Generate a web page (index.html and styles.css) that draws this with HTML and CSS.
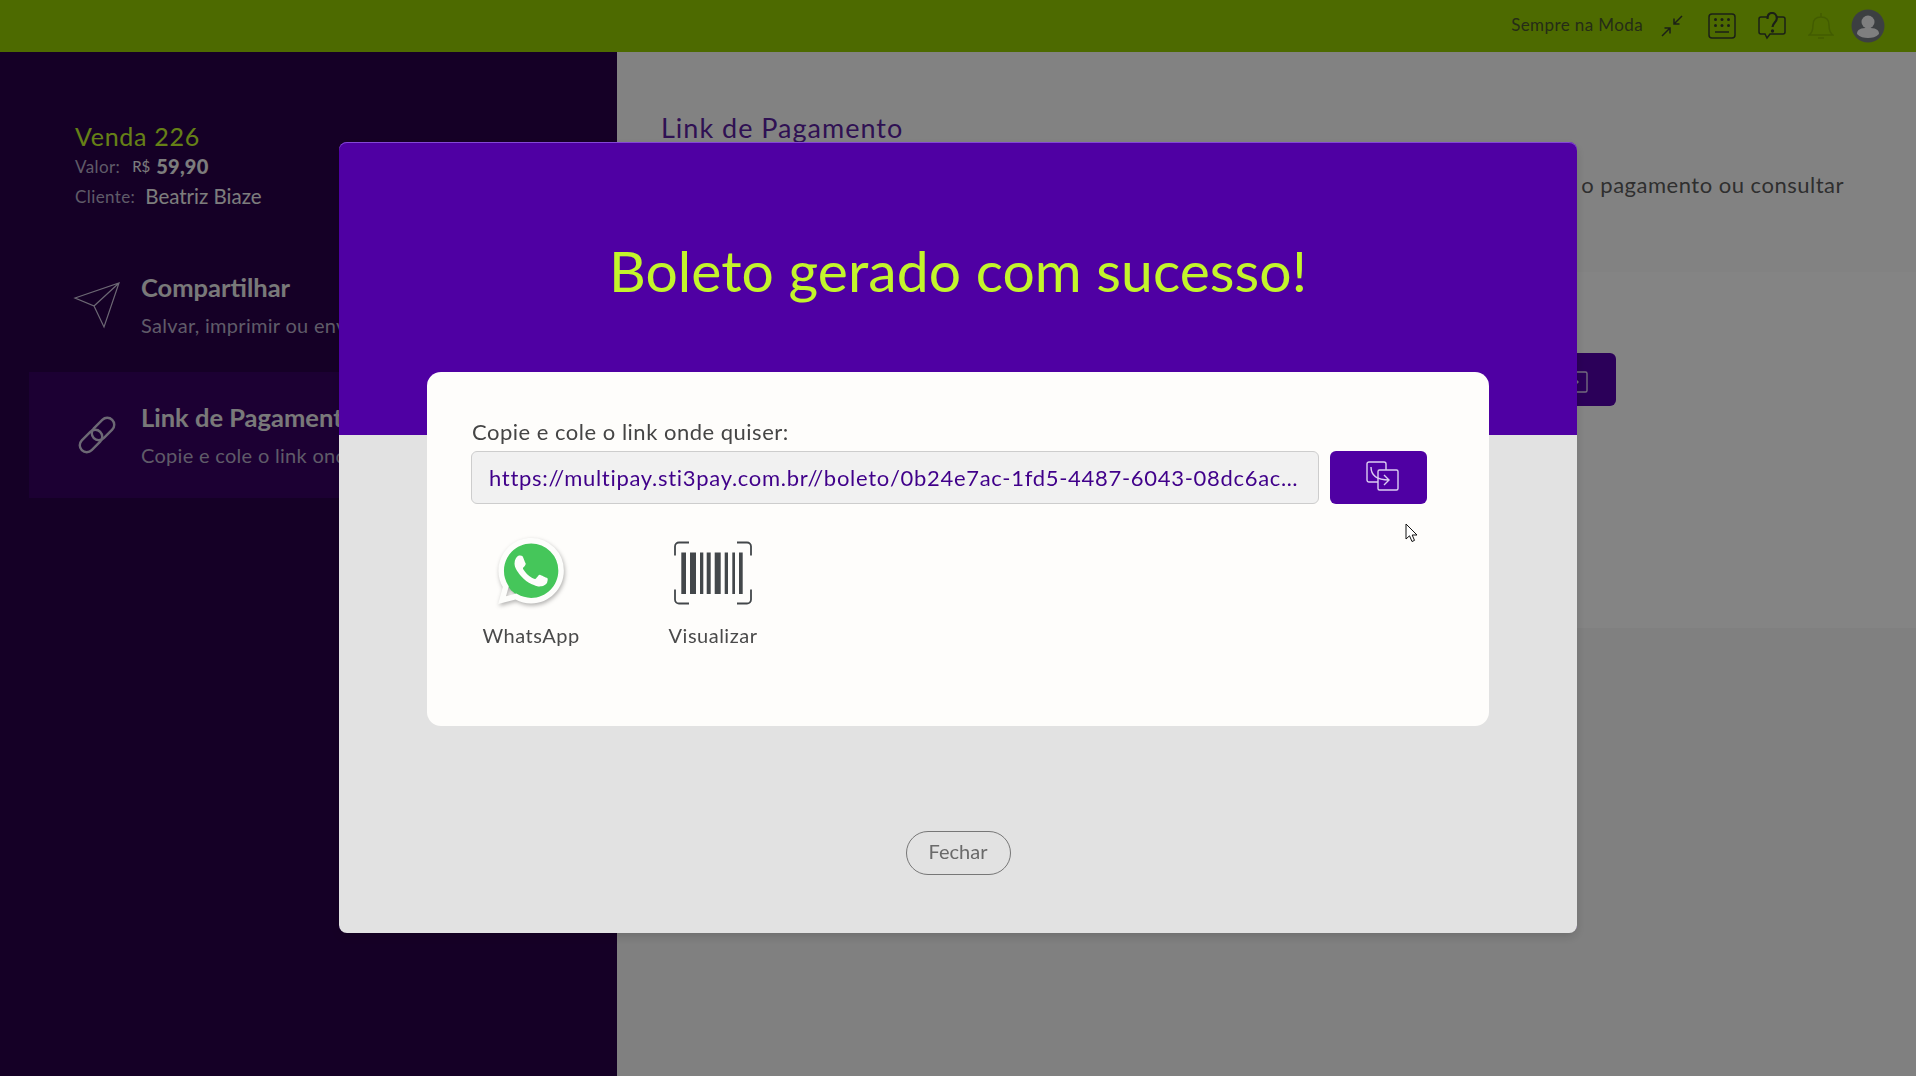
FILE: index.html
```html
<!DOCTYPE html>
<html lang="pt-BR">

<head>
    <meta charset="UTF-8">
    <meta name="viewport" content="width=device-width, initial-scale=1.0">
    <title>Link de Pagamento</title>
    <link rel="stylesheet" href="styles.css">
</head>

<body>
    <header class="topbar">
        <span class="store-name">Sempre na Moda</span>
        <svg class="top-icon compress" viewBox="0 0 22 22" fill="none">
            <path d="M21 1 13 9M13 3.500V9H18.500M1 21 9 13M3.500 13H9V18.500" />
        </svg>
        <svg class="top-icon keypad" viewBox="0 0 28 26" fill="none">
            <rect x="1" y="1" width="26" height="24" rx="3" />
            <path d="M7 19H21" />
            <g class="dots">
                <circle cx="7.500" cy="6.500" r="1.500" />
                <circle cx="14" cy="6.500" r="1.500" />
                <circle cx="20.500" cy="6.500" r="1.500" />
                <circle cx="7.500" cy="12.500" r="1.500" />
                <circle cx="14" cy="12.500" r="1.500" />
                <circle cx="20.500" cy="12.500" r="1.500" />
            </g>
        </svg>
        <svg class="top-icon help" viewBox="0 0 28 28" fill="none">
            <path d="M9 5H3a2 2 0 0 0-2 2v13a2 2 0 0 0 2 2h4l2 4 3-4h13a2 2 0 0 0 2-2V7a2 2 0 0 0-2-2h-6" />
            <path class="question" d="M9.500 7C9.500 3 11.500 1 14 1s4.800 2 4.800 5.500c0 3.500-4.300 4.500-4.300 8.500" />
            <circle class="dot" cx="14.500" cy="19" r="1.700" />
        </svg>
        <svg class="top-icon bell" viewBox="0 0 26 28" fill="none">
            <path d="M1 23c3-2 4-5 4-10 0-5 3-8 8-8s8 3 8 8c0 5 1 8 4 10ZM13 1v4M10 26h6" />
        </svg>
        <svg class="avatar" viewBox="0 0 34 34">
            <circle cx="17" cy="17" r="16.500" fill="#74797e" />
            <circle cx="17" cy="13" r="6.500" fill="#f4f4f4" />
            <path d="M6 25c0-5 4-6 11-6s11 1 11 6c-3 3-7 4-11 4s-8-1-11-4Z" fill="#f4f4f4" />
        </svg>
    </header>

    <main class="page">
        <aside class="sidebar">
            <div class="sale-info">
                <div class="sale-title">Venda 226</div>
                <div class="sale-line"><span class="sale-label">Valor:</span><small>R$</small><b>59,90</b></div>
                <div class="sale-line client"><span class="sale-label">Cliente:</span><span>Beatriz Biaze</span></div>
            </div>
            <nav>
                <a class="nav-item">
                    <svg class="nav-icon" viewBox="0 0 48 48" fill="none">
                        <path d="M2 17 46 2 31 46 21 25ZM21 25 46 2" />
                    </svg>
                    <div class="nav-text">
                        <div class="nav-title">Compartilhar</div>
                        <div class="nav-desc">Salvar, imprimir ou enviar o boleto</div>
                    </div>
                </a>
                <a class="nav-item active">
                    <svg class="nav-icon link-icon" viewBox="0 0 48 48" fill="none">
                        <rect x="17" y="11" width="26" height="14" rx="7" transform="rotate(-45 30 18)" />
                        <rect x="5" y="23" width="26" height="14" rx="7" transform="rotate(-45 18 30)" />
                    </svg>
                    <div class="nav-text">
                        <div class="nav-title">Link de Pagamento</div>
                        <div class="nav-desc">Copie e cole o link onde quiser</div>
                    </div>
                </a>
            </nav>
        </aside>

        <section class="content">
            <div class="content-head">
                <h2>Link de Pagamento</h2>
                <p>Compartilhe o link com o cliente para receber o pagamento ou consultar</p>
            </div>
            <div class="content-band">
                <button class="copy-btn">
                    <svg viewBox="0 0 33 30" fill="none">
                        <path d="M12 21H3a2 2 0 0 1-2-2V3a2 2 0 0 1 2-2h15a2 2 0 0 1 2 2v6" />
                        <rect x="12" y="9" width="20" height="20" rx="1.500" />
                        <path d="M5 6c0 8 6 13 18 13M18 14l5 5-5 5" />
                    </svg>
                </button>
            </div>
        </section>
    </main>

    <div class="overlay">
        <div class="modal">
            <h1 class="modal-title">Boleto gerado com sucesso!</h1>
            <div class="card">
                <label class="link-label">Copie e cole o link onde quiser:</label>
                <div class="link-row">
                    <input class="link-input" readonly
                        value="https://multipay.sti3pay.com.br//boleto/0b24e7ac-1fd5-4487-6043-08dc6ac1d2f3a9">
                    <button class="copy-btn">
                        <svg viewBox="0 0 33 30" fill="none">
                            <path d="M12 21H3a2 2 0 0 1-2-2V3a2 2 0 0 1 2-2h15a2 2 0 0 1 2 2v6" />
                            <rect x="12" y="9" width="20" height="20" rx="1.500" />
                            <path d="M5 6c0 8 6 13 18 13M18 14l5 5-5 5" />
                        </svg>
                    </button>
                </div>
                <div class="actions">
                    <div class="action">
                        <svg class="action-icon whatsapp" viewBox="0 0 24 24">
                            <circle cx="12.050" cy="11.900" r="10.200" fill="#45c65a" />
                            <path fill="#fdfdfb"
                                d="M17.472 14.382c-.297-.149-1.758-.867-2.03-.967-.273-.099-.471-.148-.67.15-.197.297-.767.966-.94 1.164-.173.199-.347.223-.644.075-.297-.15-1.255-.463-2.39-1.475-.883-.788-1.48-1.761-1.653-2.059-.173-.297-.018-.458.13-.606.134-.133.298-.347.446-.52.149-.174.198-.298.298-.497.099-.198.05-.371-.025-.52-.075-.149-.669-1.612-.916-2.207-.242-.579-.487-.5-.669-.51-.173-.008-.371-.01-.57-.01-.198 0-.52.074-.792.372-.272.297-1.04 1.016-1.04 2.479 0 1.462 1.065 2.875 1.213 3.074.149.198 2.096 3.2 5.077 4.487.709.306 1.262.489 1.694.625.712.227 1.36.195 1.871.118.571-.085 1.758-.719 2.006-1.413.248-.694.248-1.289.173-1.413-.074-.124-.272-.198-.57-.347m-5.421 7.403h-.004a9.87 9.87 0 01-5.031-1.378l-.361-.214-3.741.982.998-3.648-.235-.374a9.86 9.86 0 01-1.51-5.26c.001-5.45 4.436-9.884 9.888-9.884 2.64 0 5.122 1.03 6.988 2.898a9.825 9.825 0 012.893 6.994c-.003 5.45-4.437 9.884-9.885 9.884m8.413-18.297A11.815 11.815 0 0012.05 0C5.495 0 .16 5.335.157 11.892c0 2.096.547 4.142 1.588 5.945L.057 24l6.305-1.654a11.882 11.882 0 005.683 1.448h.005c6.554 0 11.89-5.335 11.893-11.893a11.821 11.821 0 00-3.48-8.413z" />
                        </svg>
                        <span>WhatsApp</span>
                    </div>
                    <div class="action">
                        <svg class="action-icon barcode" viewBox="0 0 78 63">
                            <path class="frame" d="M15 1H5a4 4 0 0 0-4 4V14M63 1H73a4 4 0 0 1 4 4V14M15 62H5a4 4 0 0 1-4-4V48M63 62H73a4 4 0 0 0 4-4V48" />
                            <rect x="7.300" y="11" width="4.700" height="41.500" />
                            <rect x="16" y="11" width="6" height="41.500" />
                            <rect x="26" y="11" width="3.300" height="41.500" />
                            <rect x="32.700" y="11" width="4" height="41.500" />
                            <rect x="40.700" y="11" width="6" height="41.500" />
                            <rect x="50.700" y="11" width="3.300" height="41.500" />
                            <rect x="58.300" y="11" width="2.700" height="41.500" />
                            <rect x="65" y="11" width="3.700" height="41.500" />
                        </svg>
                        <span>Visualizar</span>
                    </div>
                </div>
            </div>
            <div class="modal-footer">
                <button class="close-btn">Fechar</button>
            </div>
        </div>
        <svg class="cursor" viewBox="0 0 13 20">
            <path d="M1 1V16L4.500 12.800 7 18.500 9.500 17.400 7.200 12H12Z" fill="#fff" stroke="#111" stroke-width="1" />
        </svg>
    </div>
</body>

</html>
```

FILE: styles.css
```css
* {
    box-sizing: border-box;
}

body {
    margin: 0;
    height: 1076px;
    overflow: hidden;
    font-family: "Lato", "Noto Sans", sans-serif;
    background-color: #f6f6f6;
}

.topbar {
    height: 52px;
    display: flex;
    align-items: center;
    justify-content: flex-end;
    padding-right: 31px;
    background-color: #94cc00;
}

.store-name {
    font-size: 17px;
    letter-spacing: 0.4px;
    color: #48552c;
    margin-right: 18px;
    padding-bottom: 3px;
}

.top-icon {
    stroke: #343c2c;
    stroke-width: 1.500;
}

.top-icon .dots,
.top-icon .dot {
    fill: #343c2c;
    stroke: none;
}

.top-icon .question {
    stroke-width: 2.200;
}

.compress {
    width: 22px;
    height: 22px;
    margin-right: 25px;
}

.keypad {
    width: 28px;
    height: 26px;
    margin-right: 22px;
}

.help {
    width: 28px;
    height: 28px;
    margin-right: 22px;
}

.bell {
    width: 26px;
    height: 28px;
    margin-right: 17px;
    stroke: #7fb000;
}

.avatar {
    width: 34px;
    height: 34px;
}

.page {
    display: flex;
    height: 1024px;
}

.sidebar {
    width: 617px;
    flex-shrink: 0;
    padding-top: 69px;
    background-color: #2a0049;
}

.sale-info {
    padding-left: 75px;
    height: 121px;
    color: #b6aec8;
}

.sale-title {
    font-size: 25px;
    line-height: 30px;
    color: #c3f52b;
    letter-spacing: 0.7px;
}

.sale-line {
    display: flex;
    align-items: center;
    height: 28px;
    margin-top: 1px;
    font-size: 20.500px;
    color: #f0f0f0;
}

.sale-line small {
    font-size: 15px;
    margin-right: 6px;
}

.sale-line b {
    font-size: 20px;
    font-weight: 900;
    letter-spacing: 0.2px;
}

.client {
    margin-top: 2px;
}

.client .sale-label {
    margin-right: 10px;
}

.sale-label {
    font-size: 17px;
    letter-spacing: 0.4px;
    color: #b6aec8;
    margin-right: 12px;
}

.nav-item {
    display: flex;
    align-items: center;
    height: 126px;
    margin-bottom: 4px;
    margin-left: 29px;
    padding-left: 46px;
}

.nav-item.active {
    background-color: #360062;
}

.nav-icon {
    width: 48px;
    height: 48px;
    margin-left: -2px;
    margin-right: 20px;
    flex-shrink: 0;
    stroke: #cfc8de;
    stroke-width: 1.200;
}

.link-icon {
    stroke-width: 2.400;
}

.nav-text {
    margin-bottom: 2px;
}

.nav-title {
    font-size: 25.500px;
    line-height: 36px;
    font-weight: 700;
    color: #e9e9e9;
}

.nav-desc {
    margin-top: 5px;
    font-size: 20px;
    line-height: 30px;
    letter-spacing: 0.3px;
    color: #b6aec8;
    white-space: nowrap;
}

.content {
    flex: 1;
    display: flex;
    flex-direction: column;
}

.content-head {
    height: 220px;
    padding: 58px 72px 0 44px;
    background-color: #fafafa;
}

.content-head h2 {
    margin: 0;
    font-size: 27px;
    line-height: 36px;
    font-weight: 400;
    letter-spacing: 1px;
    color: #5a22a0;
}

.content-head p {
    margin: 24px 0 0;
    font-size: 22px;
    line-height: 30px;
    letter-spacing: 0.5px;
    color: #5a5a5a;
    text-align: right;
    white-space: nowrap;
}

.content-band {
    height: 356px;
    display: flex;
    justify-content: flex-end;
    align-items: flex-start;
    padding: 81px 300px 0 0;
    background-color: #fefefe;
}

.copy-btn {
    width: 97px;
    height: 53px;
    flex-shrink: 0;
    padding: 0 0 3px 8px;
    display: flex;
    align-items: center;
    justify-content: center;
    border: none;
    border-radius: 6px;
    background-color: #4f00a3;
}

.copy-btn svg {
    width: 33px;
    height: 30px;
    stroke: #dccdf2;
    stroke-width: 1.400;
}

.content-band .copy-btn {
    background-color: #5300ab;
}

.overlay {
    position: fixed;
    top: 0;
    left: 0;
    width: 100%;
    height: 100%;
    padding-bottom: 1px;
    display: flex;
    align-items: center;
    justify-content: center;
    background-color: rgba(0, 0, 0, 0.48);
}

.modal {
    width: 1238px;
    height: 791px;
    display: flex;
    flex-direction: column;
    align-items: center;
    border-radius: 8px;
    background: linear-gradient(#4f00a3 293px, #e2e2e2 293px);
    box-shadow: inset 0 1px 0 #8447d6, 0 4px 10px rgba(0, 0, 0, 0.15);
}

.modal-title {
    height: 230px;
    margin: 0;
    padding-top: 92px;
    font-size: 57px;
    line-height: 72px;
    font-weight: 400;
    letter-spacing: 0.05px;
    color: #c3f52b;
}

.card {
    width: 1062px;
    height: 354px;
    padding: 45px 62px 0 44px;
    border-radius: 14px;
    background-color: #fefdfb;
}

.link-label {
    display: block;
    padding-left: 1px;
    font-size: 22px;
    line-height: 30px;
    letter-spacing: 0.5px;
    color: #454545;
}

.link-row {
    display: flex;
    gap: 11px;
    margin-top: 4px;
}

.link-input {
    width: 848px;
    height: 53px;
    padding: 0 16px 0 17px;
    border: 1px solid #cdcdcd;
    border-radius: 6px;
    font-family: inherit;
    font-size: 22px;
    letter-spacing: 0.7px;
    color: #40008a;
    background-color: #f1f1f1;
    text-overflow: ellipsis;
}

.actions {
    display: flex;
    gap: 62px;
    margin-top: 34px;
}

.action {
    width: 120px;
    display: flex;
    flex-direction: column;
    align-items: center;
    font-size: 20px;
    letter-spacing: 0.5px;
    color: #4a4a4a;
}

.action-icon {
    display: block;
    height: 70px;
    margin-bottom: 15px;
}

.whatsapp {
    width: 66px;
    height: 66px;
    margin-bottom: 19px;
    filter: drop-shadow(1px 2px 2px rgba(0, 0, 0, 0.3));
}

.barcode {
    width: 78px;
    fill: #43474a;
}

.barcode .frame {
    fill: none;
    stroke: #43474a;
    stroke-width: 1.800;
}

.modal-footer {
    margin-top: 105px;
}

.close-btn {
    width: 105px;
    height: 44px;
    padding: 0 0 5px;
    border: 1px solid #777;
    border-radius: 22px;
    font-family: inherit;
    font-size: 20px;
    color: #6a6a6a;
    background-color: transparent;
}

.cursor {
    position: absolute;
    left: 1405px;
    top: 523px;
    width: 13px;
    height: 20px;
}
```
